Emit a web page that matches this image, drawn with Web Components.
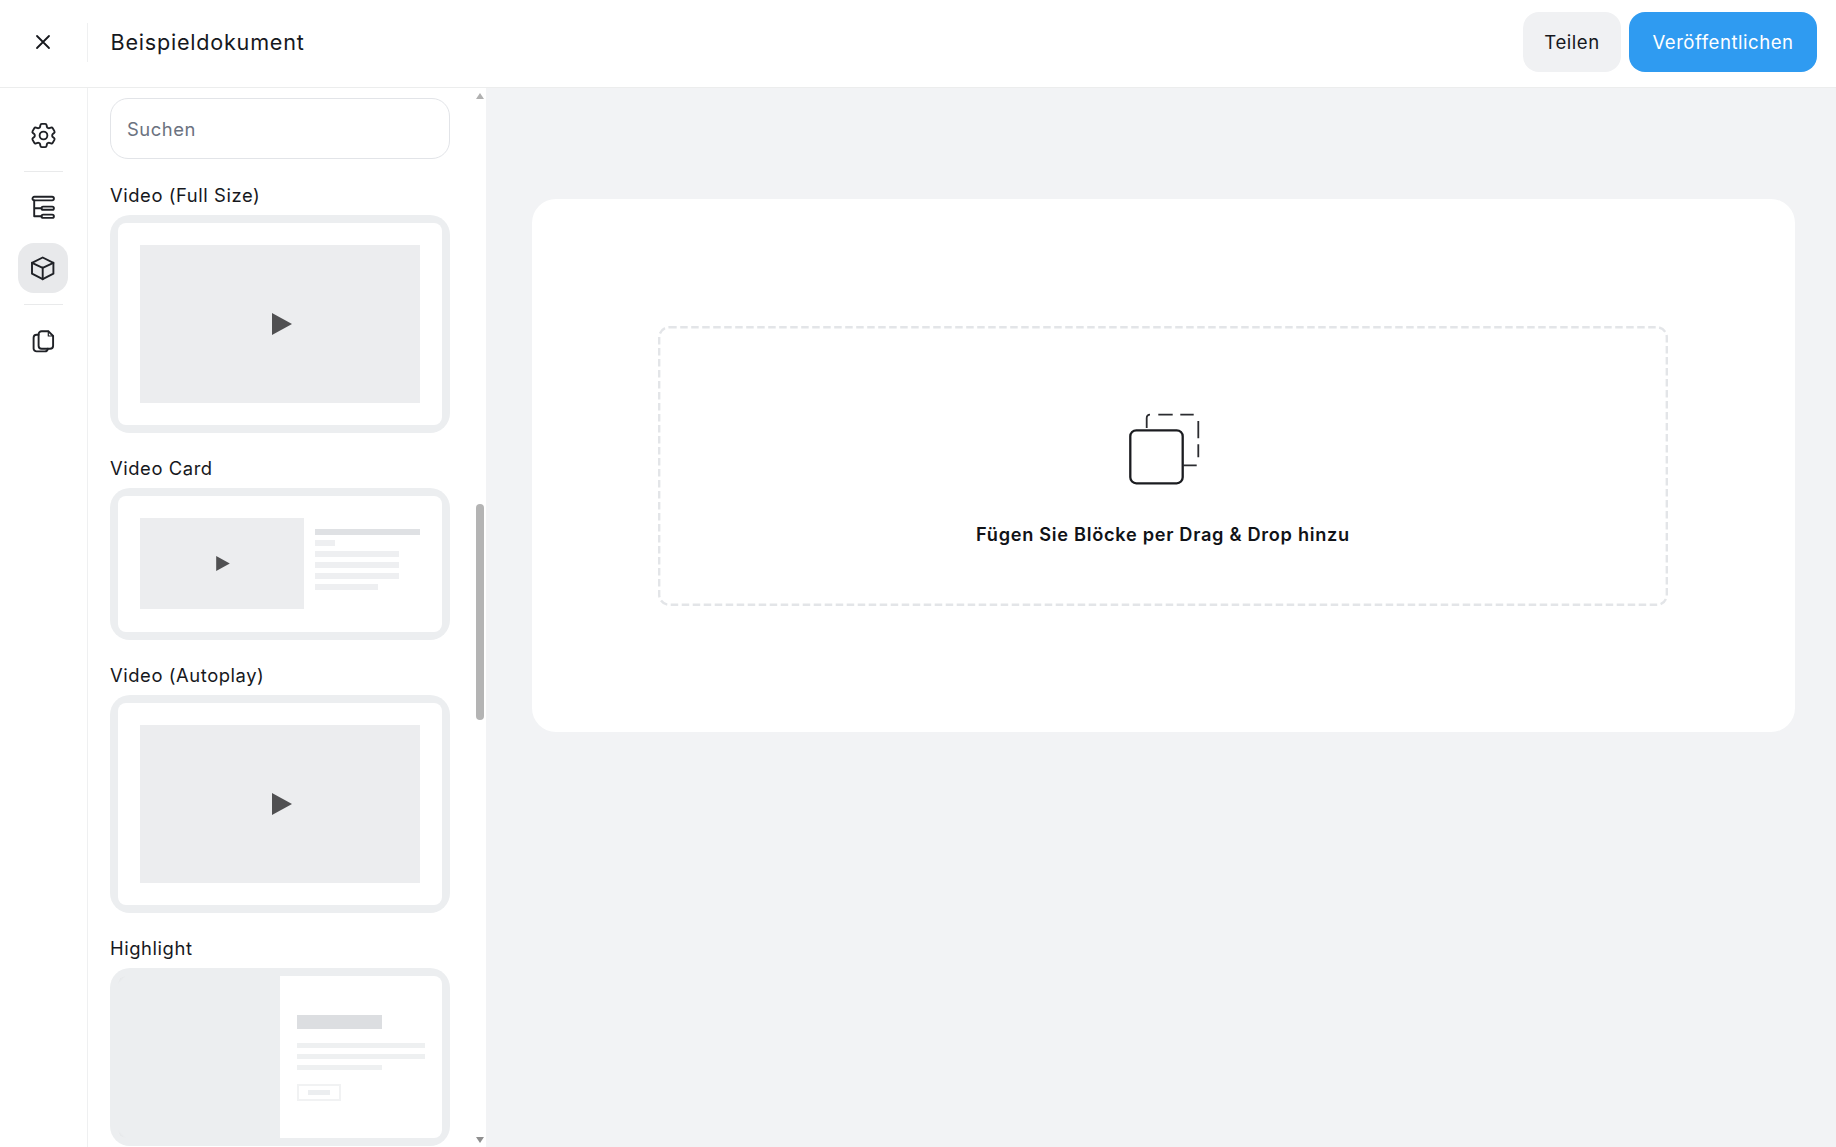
<!DOCTYPE html>
<html lang="de"><head><meta charset="utf-8"><title>Beispieldokument</title>
<style>html,body{margin:0;height:100%;overflow:hidden;background:#fff}body{font-family:"Inter","Liberation Sans",sans-serif;color:#16181d}</style>
</head><body>
<app-shell>
  <top-bar slot="top" doc="Beispieldokument"></top-bar>
  <tool-rail slot="rail"></tool-rail>
  <block-panel slot="panel">
    <block-item label="Video (Full Size)"><video-thumb></video-thumb></block-item>
    <block-item label="Video Card"><card-thumb></card-thumb></block-item>
    <block-item label="Video (Autoplay)"><video-thumb></video-thumb></block-item>
    <block-item label="Highlight"><highlight-thumb></highlight-thumb></block-item>
  </block-panel>
  <canvas-area slot="main"></canvas-area>
</app-shell>
<script>
function def(name, html){
  customElements.define(name, class extends HTMLElement{
    constructor(){super();this.attachShadow({mode:'open'});if(typeof html!=='function')this.shadowRoot.innerHTML=html;}
    connectedCallback(){if(typeof html==='function'&&!this._d){this._d=1;this.shadowRoot.innerHTML=html(this);}}
  });
}
const PLAY=(w,h)=>`<svg width="${w}" height="${h}" viewBox="0 0 20 22" aria-hidden="true"><path d="M0 0L20 11L0 22Z" fill="#505052"/></svg>`;

def('app-shell',`<style>
:host{display:grid;grid-template-columns:88px 398px 1fr;grid-template-rows:88px 1059px;width:1836px;height:1147px;overflow:hidden;background:#f2f3f5}
::slotted([slot=top]){grid-column:1/-1}
</style><slot name="top"></slot><slot name="rail"></slot><slot name="panel"></slot><slot name="main"></slot>`);

def('ui-button',`<style>
:host{display:inline-flex;align-items:center;justify-content:center;height:60px;border-radius:16px;font:400 18.6px/1 "Inter","Liberation Sans",sans-serif;letter-spacing:.52px;background:#f0f1f3;color:#16181d;box-sizing:border-box}
:host([primary]){background:#2f9bf1;color:#fff}
</style><slot></slot>`);

def('top-bar',h=>`<style>
:host{display:flex;align-items:center;height:88px;box-sizing:border-box;border-bottom:1px solid #eceded;background:#fff;padding-right:19px;padding-bottom:3px}
.close{width:86px;margin-right:1px;display:flex;justify-content:center}
.sep{width:1px;height:39px;background:#eff0f1}
.title{margin-left:22.5px;font-size:21.6px;letter-spacing:.77px;flex:1;color:#16181d}
.actions{display:flex;gap:8px}
ui-button.a{width:98px}
ui-button.b{width:188px}
</style>
<div class="close"><svg width="16" height="16" viewBox="0 0 16 16" fill="none" stroke="#16181d" stroke-width="1.8" stroke-linecap="round"><path d="M2 2L14 14M14 2L2 14"/></svg></div>
<div class="sep"></div>
<div class="title">${h.getAttribute('doc')||''}</div>
<div class="actions"><ui-button class="a">Teilen</ui-button><ui-button class="b" primary>Veröffentlichen</ui-button></div>`);

def('rail-button',`<style>
:host{display:flex;align-items:center;justify-content:center;width:50px;height:50px;border-radius:16px;color:#1f2126}
:host([active]){background:#e8e9eb}
</style><slot></slot>`);

def('tool-rail',`<style>
:host{display:flex;flex-direction:column;align-items:center;background:#fff;border-right:1px solid #eff0f1;box-sizing:border-box;width:88px;padding:22px 1px 0 0}
.d{width:39px;height:1px;background:#e9eaeb;margin:11px 0}
.t{margin-top:10px}
svg{display:block;fill:none;stroke:currentColor;stroke-width:1.9;stroke-linejoin:round;stroke-linecap:round}
</style>
<rail-button><svg width="31" height="31" viewBox="0 0 24 24" style="stroke-width:1.45"><path d="M9.594 3.94c.09-.542.56-.94 1.11-.94h2.593c.55 0 1.02.398 1.11.94l.213 1.281c.063.374.313.686.645.87.074.04.147.083.22.127.325.196.72.257 1.075.124l1.217-.456a1.125 1.125 0 0 1 1.37.49l1.296 2.247a1.125 1.125 0 0 1-.26 1.431l-1.003.827c-.293.241-.438.613-.43.992a7.723 7.723 0 0 1 0 .255c-.008.378.137.75.43.991l1.004.827c.424.35.534.955.26 1.43l-1.298 2.247a1.125 1.125 0 0 1-1.369.491l-1.217-.456c-.355-.133-.75-.072-1.076.124a6.47 6.47 0 0 1-.22.128c-.331.183-.581.495-.644.869l-.213 1.281c-.09.543-.56.94-1.11.94h-2.594c-.55 0-1.019-.398-1.11-.94l-.213-1.281c-.062-.374-.312-.686-.644-.87a6.52 6.52 0 0 1-.22-.127c-.325-.196-.72-.257-1.076-.124l-1.217.456a1.125 1.125 0 0 1-1.369-.49l-1.297-2.247a1.125 1.125 0 0 1 .26-1.431l1.004-.827c.292-.24.437-.613.43-.991a6.932 6.932 0 0 1 0-.255c.007-.38-.138-.751-.43-.992l-1.004-.827a1.125 1.125 0 0 1-.26-1.43l1.297-2.247a1.125 1.125 0 0 1 1.37-.491l1.216.456c.356.133.751.072 1.076-.124.072-.044.146-.086.22-.128.332-.183.582-.495.644-.869l.214-1.28Z"/><path d="M15 12a3 3 0 1 1-6 0 3 3 0 0 1 6 0Z"/></svg></rail-button>
<div class="d"></div>
<rail-button><svg width="26" height="26" viewBox="0 0 26 26"><rect x="2.5" y="1.8" width="21.4" height="3.6" rx="1.8"/><rect x="11.5" y="11.6" width="12.4" height="3.2" rx="1.6"/><rect x="11.5" y="19.6" width="12.4" height="3.3" rx="1.65"/><path d="M4.2 5.4V21.2H11.5M4.2 13.2H11.5"/></svg></rail-button>
<rail-button class="t" active><svg width="26" height="26" viewBox="0 0 26 26"><path d="M12.7 2.5L23.4 7.8V18.7L12.7 24.2L2 18.7V7.8Z"/><path d="M2 7.8L12.7 12.8L23.4 7.8M12.7 12.8V24.2"/></svg></rail-button>
<div class="d"></div>
<rail-button><svg width="26" height="26" viewBox="0 0 26 26"><path d="M8.6 6.8H6.6A3 3 0 0 0 3.6 9.8V20.4A3 3 0 0 0 6.6 23.4H14.8A3 3 0 0 0 17.8 20.8"/><path d="M8.6 6.2A3 3 0 0 1 11.6 3.2H18.3L23.1 8V17.8A3 3 0 0 1 20.1 20.8H11.6A3 3 0 0 1 8.6 17.8Z"/><path d="M18.3 3.2V8H23.1" stroke-width="1.2"/></svg></rail-button>`);

def('block-panel',`<style>
:host{display:flex;background:#fff;height:1059px;overflow:hidden;width:398px;box-sizing:border-box}
.list{width:386px;box-sizing:border-box;padding:10px 24px 0 22px;overflow:hidden;flex:none}
.search{height:61px;box-sizing:border-box;border:1px solid #e2e4e8;border-radius:18px;display:flex;align-items:center;padding-left:16px;font-size:18.4px;letter-spacing:.55px;color:#6b7280;margin-bottom:22px}
.bar{width:12px;display:flex;flex-direction:column;align-items:center;flex:none}
.up,.down{width:0;height:0;border-left:4.5px solid transparent;border-right:4.5px solid transparent}
.up{border-bottom:6px solid #b0b0b0;margin-top:5px}
.down{border-top:6px solid #8f8f8f;margin-bottom:4px}
.thumb{width:8px;height:216px;border-radius:4px;background:#b4b4b4;margin-top:405px}
.sp{flex:1}
</style>
<div class="list"><div class="search">Suchen</div><slot></slot></div>
<div class="bar"><div class="up"></div><div class="thumb"></div><div class="sp"></div><div class="down"></div></div>`);

def('block-item',h=>`<style>
:host{display:block;margin-bottom:21px}
.l{font-size:18.4px;line-height:28px;letter-spacing:.57px;margin-bottom:6px;color:#16181d}
.c{padding:8px;background:#eceef0;border-radius:20px}
.i{background:#fff;border-radius:8px;overflow:hidden}
</style><div class="l">${h.getAttribute('label')}</div><div class="c"><div class="i"><slot></slot></div></div>`);

def('video-thumb',`<style>
:host{display:block;padding:22px}
.v{height:158px;box-sizing:border-box;padding-left:3px;padding-bottom:1px;background:#ecedef;display:flex;align-items:center;justify-content:center}
svg{display:block}
</style><div class="v">${PLAY(20,22)}</div>`);

def('card-thumb',`<style>
:host{display:flex;padding:22px 22px 23px;gap:11px}
.v{width:164px;height:91px;box-sizing:border-box;padding-left:2px;background:#ecedef;display:flex;align-items:center;justify-content:center;flex:none}
.t{flex:1;padding-top:11px;display:flex;flex-direction:column;gap:5px}
i{display:block;height:6px;background:#eeeff1}
i.h{background:#dfe1e4;width:105px}
svg{display:block}
</style><div class="v">${PLAY(14,15)}</div>
<div class="t"><i class="h"></i><i style="width:20px"></i><i style="width:84px"></i><i style="width:84px"></i><i style="width:84px"></i><i style="width:63px"></i></div>`);

def('highlight-thumb',`<style>
:host{display:flex;height:162px}
.v{width:162px;flex:none;background:linear-gradient(135deg,#dcdee0 0,#eceef0 6px) top left/8px 8px no-repeat,linear-gradient(45deg,#dcdee0 0,#eceef0 6px) bottom left/8px 8px no-repeat,#eceef0}
.t{flex:1;padding:39px 0 0 17px}
.ti{width:85px;height:14px;background:#dcdee1;margin-bottom:14px}
.ln{height:5px;background:#eef0f1;width:128px;margin-bottom:6px}
.btn{margin-top:14px;width:44px;height:17px;box-sizing:border-box;border:2px solid #f1f2f3;display:flex;align-items:center;justify-content:center}
.btn i{display:block;width:22px;height:5px;background:#eceef0}
</style><div class="v"></div><div class="t"><div class="ti"></div><div class="ln"></div><div class="ln"></div><div class="ln" style="width:85px"></div><div class="btn"><i></i></div></div>`);

def('drop-zone',`<style>
:host{display:flex;flex-direction:column;align-items:center;box-sizing:border-box;height:280px;padding-top:87px;position:relative}
.edge{position:absolute;left:0;top:0;width:100%;height:100%;fill:none;stroke:#e3e5e8;stroke-width:2.4;stroke-dasharray:7.5 3.5}
.ic{display:block;fill:none;stroke:#1b1c20;position:relative;margin-left:3px}
.m{margin-top:36px;font-size:18.2px;font-weight:600;letter-spacing:.7px;line-height:26px;color:#111317;position:relative}
</style>
<svg class="edge" viewBox="0 0 1010 280" preserveAspectRatio="none"><rect x="1.2" y="1.2" width="1007.6" height="277.6" rx="10"/></svg>
<svg class="ic" width="72" height="72" viewBox="0 0 72 72"><rect x="1.3" y="17.3" width="52.4" height="53" rx="6" stroke-width="2.3"/><path d="M17.7 15V5.3Q17.7 1.7 21 1.7M29.3 1.7H43.7M51.3 1.7H64.7M69.3 8V25.3M69.3 31.3V44.3M53.7 52.3H67.7" stroke-width="1.8" stroke="#2b2c30"/></svg>
<div class="m">Fügen Sie Blöcke per Drag &amp; Drop hinzu</div>`);

def('canvas-area',`<style>
:host{display:block;box-sizing:border-box;padding:111px 41px 0 46px;background:#f2f3f5}
.card{background:#fff;border-radius:24px;height:533px;box-sizing:border-box;padding:127px 127px 0 126px}
</style><div class="card"><drop-zone></drop-zone></div>`);
</script>
</body></html>
